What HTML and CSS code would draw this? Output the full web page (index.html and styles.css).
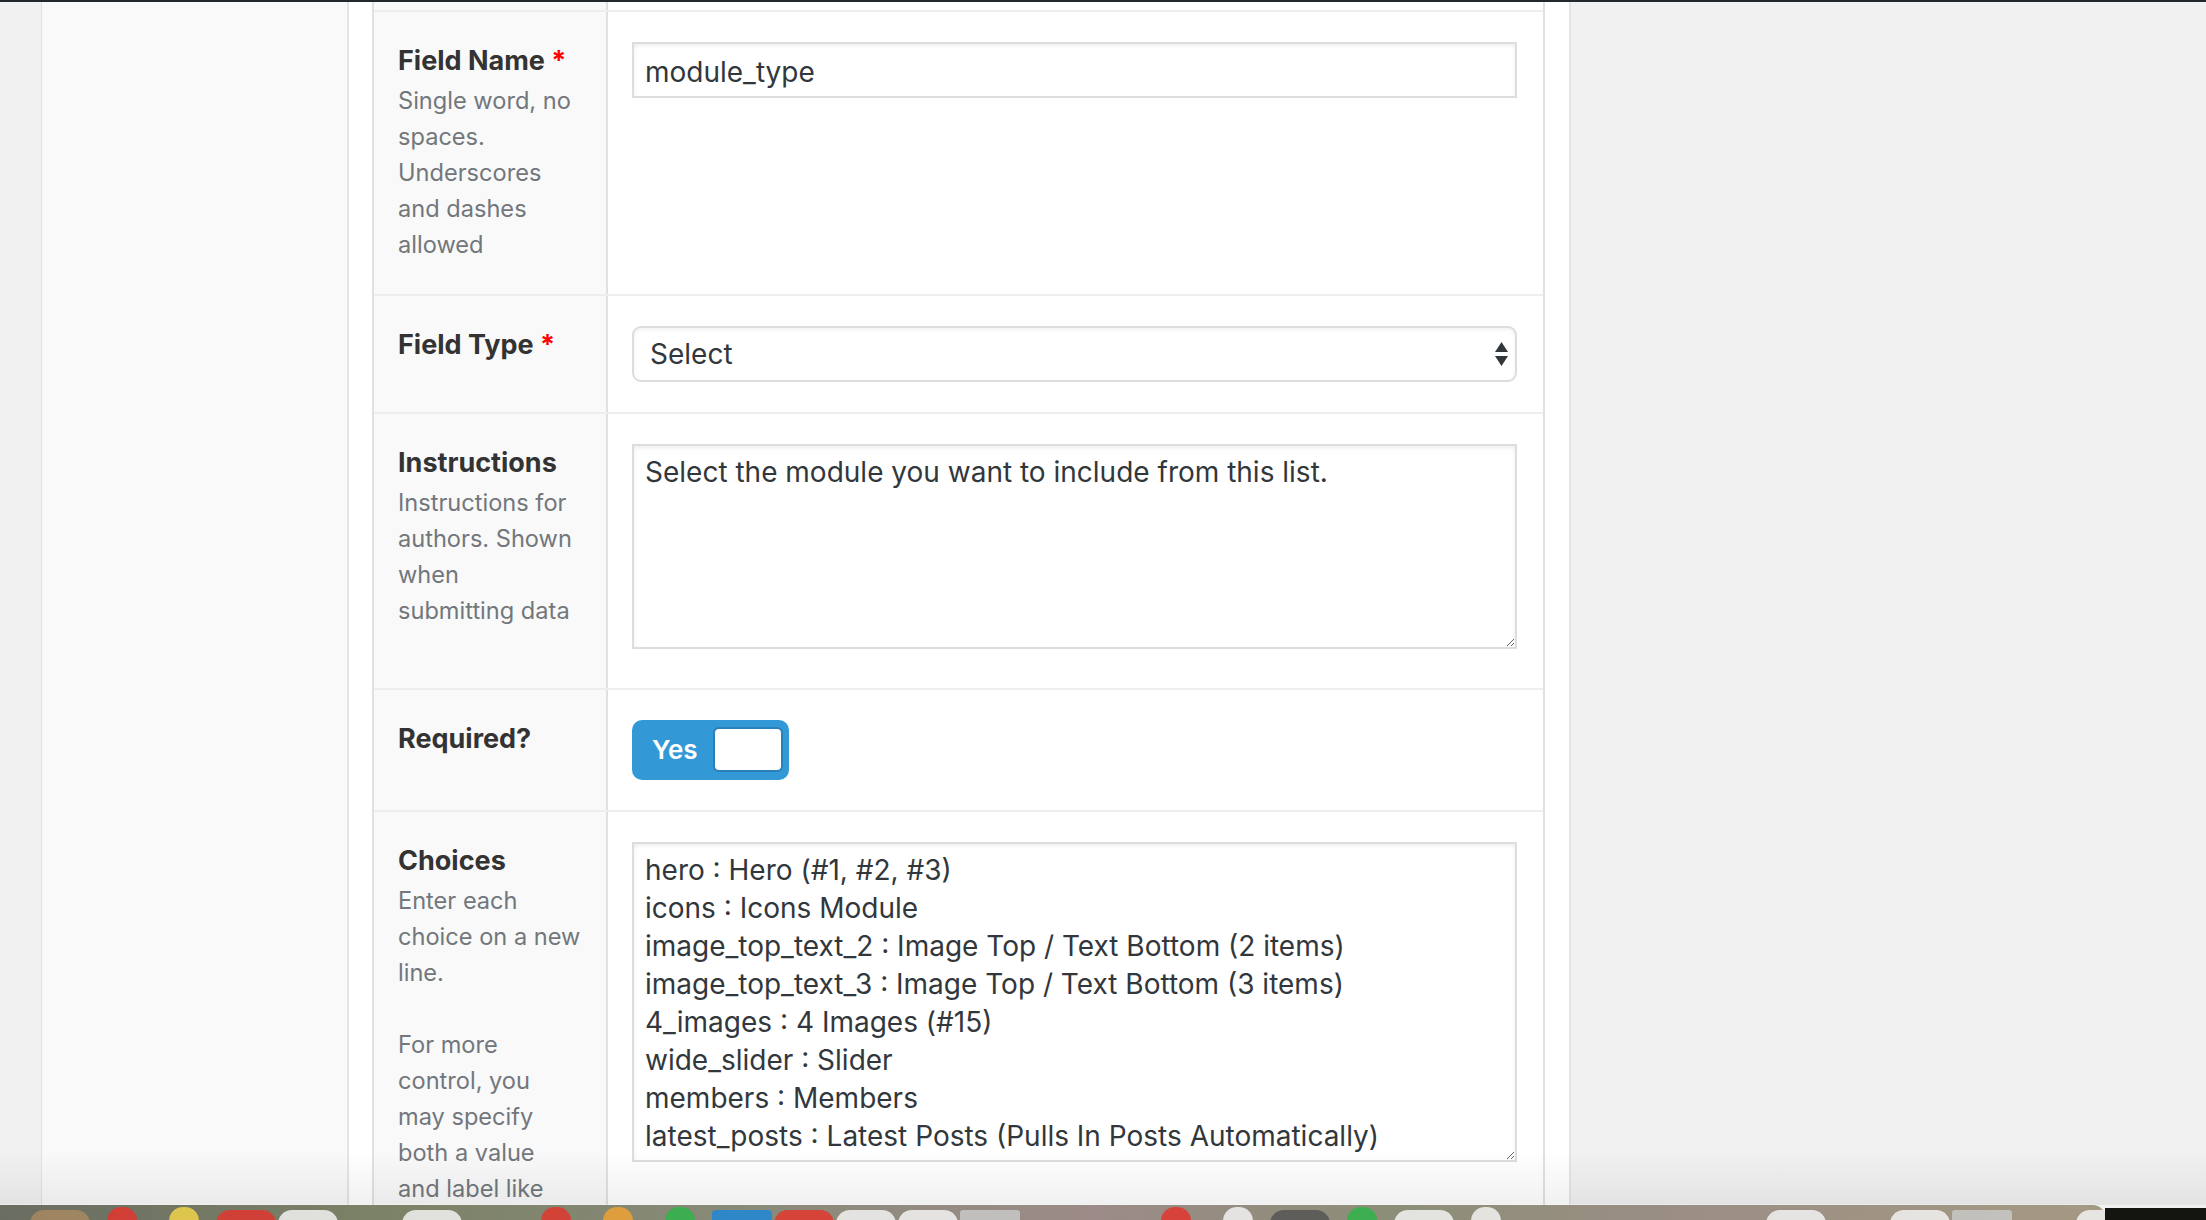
FILE: index.html
```html
<!DOCTYPE html>
<html lang="en">
<head>
<meta charset="utf-8">
<title>Edit Field Group</title>
<link rel="stylesheet" href="styles.css">
</head>
<body>
<div class="topbar"></div>
<div class="page">
  <div class="gutter"></div>
  <div class="side"></div>
  <div class="postbox">
    <div class="fields">
      <div class="row row-cut">
        <div class="lab"></div>
        <div class="inp"></div>
      </div>

      <div class="row">
        <div class="lab">
          <label>Field Name <span class="req">*</span></label>
          <p class="desc">Single word, no<br>spaces.<br>Underscores<br>and dashes<br>allowed</p>
        </div>
        <div class="inp">
          <input class="text" type="text" value="module_type">
        </div>
      </div>

      <div class="row">
        <div class="lab">
          <label>Field Type <span class="req">*</span></label>
        </div>
        <div class="inp">
          <div class="select">
            <span>Select</span>
            <svg class="arrows" width="13" height="24" viewBox="0 0 13 24"><polygon points="6.5,0 13,10 0,10"/><polygon points="0,14 13,14 6.5,24"/></svg>
          </div>
        </div>
      </div>

      <div class="row">
        <div class="lab">
          <label>Instructions</label>
          <p class="desc">Instructions for<br>authors. Shown<br>when<br>submitting data</p>
        </div>
        <div class="inp">
          <textarea class="area area-short">Select the module you want to include from this list.</textarea>
        </div>
      </div>

      <div class="row">
        <div class="lab">
          <label>Required?</label>
        </div>
        <div class="inp">
          <div class="switch">
            <span class="switch-on">Yes</span>
            <span class="switch-slider"></span>
          </div>
        </div>
      </div>

      <div class="row">
        <div class="lab">
          <label>Choices</label>
          <p class="desc">Enter each<br>choice on a new<br>line.<br><br>For more<br>control, you<br>may specify<br>both a value<br>and label like</p>
        </div>
        <div class="inp">
          <textarea class="area area-tall">hero : Hero (#1, #2, #3)
icons : Icons Module
image_top_text_2 : Image Top / Text Bottom (2 items)
image_top_text_3 : Image Top / Text Bottom (3 items)
4_images : 4 Images (#15)
wide_slider : Slider
members : Members
latest_posts : Latest Posts (Pulls In Posts Automatically)</textarea>
        </div>
      </div>
    </div>
  </div>
</div>

<div class="shade"></div>
<div class="dock">
  <span class="ic tan"></span>
  <span class="ic red small"></span>
  <span class="ic yellow small"></span>
  <span class="ic red"></span>
  <span class="ic white"></span>
  <span class="ic none"></span>
  <span class="ic white"></span>
  <span class="ic none"></span>
  <span class="ic red small"></span>
  <span class="ic orange small"></span>
  <span class="ic green small"></span>
  <span class="ic blue"></span>
  <span class="ic red"></span>
  <span class="ic white"></span>
  <span class="ic white"></span>
  <span class="ic grey"></span>
  <span class="ic none"></span>
  <span class="ic none"></span>
  <span class="ic red small"></span>
  <span class="ic white small"></span>
  <span class="ic dark"></span>
  <span class="ic green small"></span>
  <span class="ic white"></span>
  <span class="ic white small"></span>
  <span class="ic none"></span>
  <span class="ic none"></span>
  <span class="ic none"></span>
  <span class="ic none"></span>
  <span class="ic white"></span>
  <span class="ic none"></span>
  <span class="ic white"></span>
  <span class="ic grey"></span>
  <span class="ic none"></span>
  <span class="ic white"></span>
</div>
<div class="dock-end"></div>
</body>
</html>
```

FILE: styles.css
```css
* { box-sizing: border-box; }

html, body {
  margin: 0;
  padding: 0;
}

body {
  position: relative;
  height: 1220px;
  overflow: hidden;
  background: #f1f1f1;
  font-family: "Inter", "Noto Sans", sans-serif;
  color: #333;
}

.topbar {
  height: 2px;
  background: #23282d;
}

.page {
  display: flex;
  height: 1218px;
}

.gutter {
  width: 42px;
  background: #f1f1f1;
  border-right: 1px solid #e1e1e1;
}

.side {
  width: 305px;
  background: #f9f9f9;
}

.postbox {
  width: 1224px;
  background: #fff;
  border-left: 2px solid #e5e5e5;
  border-right: 2px solid #e5e5e5;
  padding: 0 24px 0 23px;
  overflow: hidden;
}

.fields {
  border-left: 2px solid #e1e1e1;
  border-right: 2px solid #e1e1e1;
}

.row {
  display: grid;
  grid-template-columns: 234px 1fr;
  border-top: 2px solid #eeeeee;
}

.row-cut {
  border-top: 0;
  height: 8px;
}

.lab {
  background: #f9f9f9;
  border-right: 2px solid #e1e1e1;
  padding: 31px 20px 31px 24px;
}

.row-cut .lab,
.row-cut .inp {
  padding: 0;
}

.lab label {
  display: block;
  font-size: 27px;
  line-height: 36px;
  font-weight: 700;
  color: #333;
  margin: 0 0 4px;
  white-space: nowrap;
}

.req {
  color: #f00;
}

.desc {
  margin: 0;
  font-size: 23.6px;
  line-height: 36px;
  color: #72777c;
  white-space: nowrap;
}

.inp {
  padding: 30px 26px 30px 24px;
}

.text {
  display: block;
  width: 100%;
  height: 56px;
  margin: 0;
  border: 2px solid #dddddd;
  border-radius: 0;
  box-shadow: inset 0 2px 4px rgba(0, 0, 0, 0.07);
  padding: 3px 11px 0;
  font-family: inherit;
  font-size: 28px;
  color: #32373c;
  background: #fff;
  outline: none;
}

.select {
  display: flex;
  align-items: center;
  justify-content: space-between;
  height: 56px;
  border: 2px solid #dddddd;
  border-radius: 9px;
  box-shadow: inset 0 2px 4px rgba(0, 0, 0, 0.05);
  padding: 0 7px 0 16px;
  font-size: 28px;
  color: #32373c;
  background: #fff;
}

.arrows {
  fill: #32373c;
}

.area {
  display: block;
  width: 100%;
  margin: 0;
  border: 2px solid #dddddd;
  border-radius: 0;
  box-shadow: inset 0 2px 4px rgba(0, 0, 0, 0.07);
  padding: 7px 11px;
  font-family: inherit;
  font-size: 28px;
  line-height: 38px;
  color: #32373c;
  background: #fff;
  resize: vertical;
  overflow: hidden;
  outline: none;
}

.area-short {
  height: 205px;
  margin-bottom: 9px;
}

.area-tall {
  height: 320px;
}

.switch {
  display: flex;
  align-items: center;
  width: 157px;
  height: 60px;
  background: #3399d6;
  border-radius: 10px;
  padding: 7px 6px 8px 20px;
}

.switch-on {
  font-size: 26px;
  font-weight: 600;
  color: #fff;
  line-height: 36px;
}

.switch-slider {
  margin-left: auto;
  width: 70px;
  height: 45px;
  background: #fff;
  border: 2px solid #2a7fba;
  border-radius: 6px;
}

.shade {
  position: absolute;
  left: 0;
  right: 0;
  top: 1150px;
  height: 55px;
  background: linear-gradient(rgba(0, 0, 0, 0), rgba(0, 0, 0, 0.06));
  pointer-events: none;
}

.dock {
  position: absolute;
  left: 0;
  top: 1205px;
  width: 2105px;
  height: 15px;
  border-top-right-radius: 12px;
  background: linear-gradient(90deg, #6a6d62 0%, #7b8266 18%, #888a78 35%, #9c8b88 52%, #8c8e77 66%, #9b8e85 80%, #a49a82 100%);
  box-shadow: 0 -1px 0 rgba(255, 255, 255, 0.3);
  display: flex;
  gap: 2px;
  padding-left: 30px;
  overflow: hidden;
}

.ic {
  flex: none;
  width: 60px;
  height: 14px;
  margin-top: 5px;
  border-radius: 30px 30px 0 0;
  opacity: 0.85;
}

.ic.small {
  width: 30px;
  margin-left: 15px;
  margin-right: 15px;
  margin-top: 2px;
  border-radius: 15px 15px 0 0;
}

.ic.none { background: transparent; }
.ic.tan { background: #a88860; }
.ic.red { background: #e2362e; }
.ic.yellow { background: #f1d24a; }
.ic.white { background: #f2f2f2; }
.ic.orange { background: #efa235; }
.ic.green { background: #2fb54a; }
.ic.blue { background: #1f87d6; border-radius: 4px 4px 0 0; }
.ic.grey { background: #c8c8c8; border-radius: 3px 3px 0 0; }
.ic.dark { background: #555; }

.dock-end {
  position: absolute;
  left: 2105px;
  top: 1208px;
  width: 101px;
  height: 12px;
  background: #141510;
}
```
